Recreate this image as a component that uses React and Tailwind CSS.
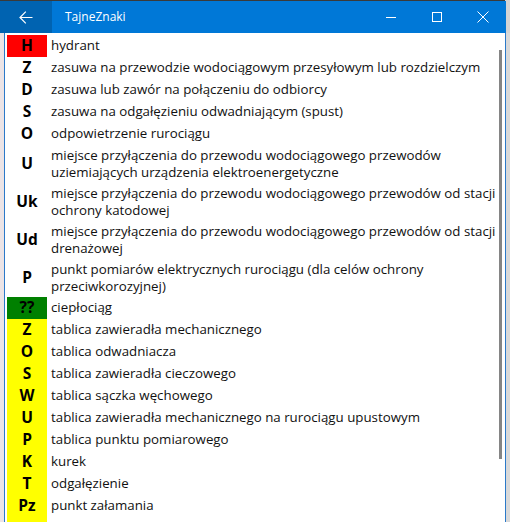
import React from "react";

const rows = [
  { code: "H", bg: "bg-[#ff0000]", lines: ["hydrant"] },
  { code: "Z", bg: "", lines: ["zasuwa na przewodzie wodociągowym przesyłowym lub rozdzielczym"] },
  { code: "D", bg: "", lines: ["zasuwa lub zawór na połączeniu do odbiorcy"] },
  { code: "S", bg: "", lines: ["zasuwa na odgałęzieniu odwadniającym (spust)"] },
  { code: "O", bg: "", lines: ["odpowietrzenie rurociągu"] },
  { code: "U", bg: "", lines: ["miejsce przyłączenia do przewodu wodociągowego przewodów", "uziemiających urządzenia elektroenergetyczne"] },
  { code: "Uk", bg: "", lines: ["miejsce przyłączenia do przewodu wodociągowego przewodów od stacji", "ochrony katodowej"] },
  { code: "Ud", bg: "", lines: ["miejsce przyłączenia do przewodu wodociągowego przewodów od stacji", "drenażowej"] },
  { code: "P", bg: "", lines: ["punkt pomiarów elektrycznych rurociągu (dla celów ochrony", "przeciwkorozyjnej)"] },
  { code: "??", bg: "bg-[#008000]", lines: ["ciepłociąg"] },
  { code: "Z", bg: "bg-[#ffff00]", lines: ["tablica zawieradła mechanicznego"] },
  { code: "O", bg: "bg-[#ffff00]", lines: ["tablica odwadniacza"] },
  { code: "S", bg: "bg-[#ffff00]", lines: ["tablica zawieradła cieczowego"] },
  { code: "W", bg: "bg-[#ffff00]", lines: ["tablica sączka węchowego"] },
  { code: "U", bg: "bg-[#ffff00]", lines: ["tablica zawieradła mechanicznego na rurociągu upustowym"] },
  { code: "P", bg: "bg-[#ffff00]", lines: ["tablica punktu pomiarowego"] },
  { code: "K", bg: "bg-[#ffff00]", lines: ["kurek"] },
  { code: "T", bg: "bg-[#ffff00]", lines: ["odgałęzienie"] },
  { code: "Pz", bg: "bg-[#ffff00]", lines: ["punkt załamania"] },
  { code: "", bg: "bg-[#ffff00]", lines: [""] },
];

function Row({ r }) {
  const two = r.lines.length > 1;
  return (
    <div className={`flex shrink-0 ${two ? "h-[38px]" : "h-[22px]"}`}>
      <div
        className={`w-[40px] shrink-0 flex items-center justify-center ${r.bg} text-[15.5px] font-bold text-black`}
      >
        {r.code}
      </div>
      <div className="pl-[4px] flex flex-col justify-center text-[13.3px] leading-[17.5px] text-[#111] whitespace-nowrap">
        {r.lines.map((l, i) => (
          <div key={i}>{l}</div>
        ))}
      </div>
    </div>
  );
}

export default function App() {
  return (
    <div
      className="w-[510px] h-[522px] overflow-hidden bg-[#d4d4d4] flex flex-col"
      style={{ fontFamily: '"Open Sans", "Noto Sans", sans-serif' }}
    >
      <div className="h-[1px] bg-[#3a3a3a] w-[505px] shrink-0" />
      <div className="flex w-[506px] h-[32px] bg-[#0078d7] text-white shrink-0">
        <div className="w-[52px] h-full bg-[#0063b1] flex items-center justify-center">
          <svg width="14" height="13" viewBox="0 0 14 13" fill="none" stroke="white" strokeWidth="1.2">
            <path d="M13.5 6.5H1M6.8 0.7L1 6.5l5.8 5.8" />
          </svg>
        </div>
        <div className="pl-[13px] flex items-center text-[12px]">TajneZnaki</div>
        <div className="flex-1" />
        <div className="w-[46px] flex items-center justify-center">
          <svg width="11" height="11" viewBox="0 0 11 11" stroke="white" strokeWidth="1">
            <path d="M0 5.5h10" />
          </svg>
        </div>
        <div className="w-[46px] flex items-center justify-center">
          <svg width="11" height="11" viewBox="0 0 11 11" fill="none" stroke="white" strokeWidth="1">
            <rect x="0.5" y="0.5" width="9" height="9" />
          </svg>
        </div>
        <div className="w-[46px] flex items-center justify-center">
          <svg width="12" height="12" viewBox="0 0 12 12" fill="none" stroke="white" strokeWidth="1">
            <path d="M0.5 0.5l11 11M11.5 0.5l-11 11" />
          </svg>
        </div>
      </div>
      <div className="flex flex-1 min-h-0">
        <div className="w-[4px] bg-[#ece4e6] shrink-0" />
        <div className="w-[1px] bg-[#2b79c9] shrink-0" />
        <div className="w-[500px] bg-white flex min-h-0 relative">
          <div className="pl-[2px] pt-[2px] flex flex-col overflow-hidden">
            {rows.map((r, i) => (
              <Row key={i} r={r} />
            ))}
          </div>
          <div className="absolute left-[494px] top-[17px] w-[3px] h-[409px] bg-[#858585]" />
        </div>
        <div className="w-[1px] bg-[#2b79c9] shrink-0" />
        <div className="flex-1 bg-[#d9d9d9]" />
      </div>
    </div>
  );
}
